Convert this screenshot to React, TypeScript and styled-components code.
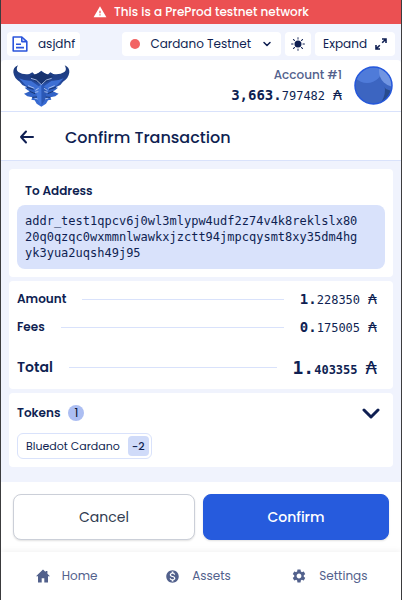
import React from "react";
import styled, { createGlobalStyle } from "styled-components";
import { MdWarning, MdMonetizationOn, MdSettings } from "react-icons/md";
import { BsBrightnessHighFill } from "react-icons/bs";
import { ChevronDown } from "lucide-react";

const navy = "#0f1f52";
const slate = "#52618c";
const pale = "#f0f3fd";
const line = "#d9e2fb";

const GlobalStyle = createGlobalStyle`
  *, *::before, *::after { box-sizing: border-box; }
  body {
    margin: 0;
    background: #ffffff;
    color: ${navy};
    font-family: Poppins, Inter, sans-serif;
    font-size: 12px;
  }
  button { font-family: inherit; color: inherit; cursor: pointer; }
  svg { flex: none; display: block; }
`;

const Page = styled.div`
  display: flex;
  flex-direction: column;
  min-height: 100vh;
  background: ${pale};
  border: solid #3c3c3e;
  border-width: 0 1px;
`;

const Banner = styled.div`
  display: flex;
  align-items: center;
  justify-content: center;
  gap: 7px;
  height: 24px;
  background: #eb5052;
  color: #ffffff;
  font-weight: 500;
`;

const TopBar = styled.div`
  display: flex;
  align-items: center;
  gap: 4px;
  padding: 8px 6px 4px;
`;

const Spacer = styled.div`
  flex: 1;
`;

const Pill = styled.button<{ $gap?: number; $pad?: number }>`
  display: flex;
  align-items: center;
  gap: ${(p) => p.$gap ?? 8}px;
  height: 24px;
  padding: 0 ${(p) => p.$pad ?? 8}px;
  border: 0;
  border-radius: 4px;
  background: #ffffff;
  font-size: 12px;
  white-space: nowrap;
`;

const Dot = styled.span`
  width: 10px;
  height: 10px;
  border-radius: 50%;
  background: #f26464;
`;

const Header = styled.header`
  display: flex;
  align-items: center;
  justify-content: space-between;
  height: 52px;
  padding: 0 8px 0 12px;
  background: #ffffff;
  border-bottom: 1px solid ${line};
  border-radius: 4px 4px 0 0;
`;

const Account = styled.div`
  display: flex;
  align-items: center;
  gap: 12px;
`;

const AccountText = styled.div`
  display: flex;
  flex-direction: column;
  align-items: flex-end;
  line-height: 20px;
`;

const AccountName = styled.span`
  color: ${slate};
  font-weight: 500;
`;

const TitleBar = styled.div`
  display: flex;
  align-items: center;
  gap: 28px;
  height: 49px;
  padding: 2px 16px 0;
  background: #ffffff;
  border-bottom: 1px solid ${line};
`;

const IconButton = styled.button`
  display: flex;
  padding: 0;
  border: 0;
  background: none;
`;

const Title = styled.h1`
  margin: 0;
  font-size: 16px;
  font-weight: 500;
`;

const Content = styled.main`
  display: flex;
  flex: 1;
  flex-direction: column;
  gap: 4px;
  padding: 8px 8px 15px;
`;

const Card = styled.section`
  padding: 8px;
  background: #ffffff;
  border-radius: 4px;
`;

const Label = styled.h2`
  margin: 0;
  font-size: 12px;
  line-height: 24px;
  font-weight: 600;
`;

const AddressLabel = styled(Label)`
  padding: 2px 8px;
`;

const Address = styled.p`
  margin: 0;
  padding: 8px 24px 8px 8px;
  border-radius: 8px;
  background: #d9e2fb;
  font-family: "DejaVu Sans Mono", monospace;
  line-height: 16px;
  word-break: break-all;
`;

const Row = styled.div`
  display: flex;
  align-items: center;
  gap: 16px;
  height: 20px;
  margin-bottom: 8px;
  padding-right: 8px;
  font-weight: 600;
`;

const TotalRow = styled(Row)`
  height: 32px;
  margin: 14px 0 -2px;
  font-size: 14px;
`;

const Rule = styled.span`
  flex: 1;
  height: 1px;
  background: ${line};
`;

const Money = styled.span<{ $total?: boolean }>`
  font-family: "DejaVu Sans Mono", monospace;
  font-size: ${(p) => (p.$total ? 18 : 14)}px;
  font-weight: 400;
`;

const Whole = styled.b`
  font-weight: 700;
`;

const Decimals = styled.span<{ $total?: boolean }>`
  margin-right: 8px;
  font-size: 12px;
  font-weight: ${(p) => (p.$total ? 700 : 400)};
`;

const Symbol = styled.span<{ $total?: boolean }>`
  font-family: "DejaVu Sans", sans-serif;
  font-size: ${(p) => (p.$total ? 18 : 14)}px;
`;

const TokensHead = styled.div`
  display: flex;
  align-items: center;
  gap: 8px;
  padding-right: 5px;
`;

const Count = styled.span`
  width: 16px;
  height: 16px;
  border-radius: 50%;
  background: #acbef2;
  color: #0a1230;
  line-height: 16px;
  text-align: center;
`;

const Chip = styled.div`
  display: inline-flex;
  align-items: center;
  gap: 8px;
  height: 26px;
  margin-top: 8px;
  padding: 2px 2px 2px 8px;
  border: 1px solid ${line};
  border-radius: 6px;
  font-size: 11px;
`;

const ChipValue = styled.span`
  padding: 0 4px;
  border-radius: 4px;
  background: #d0dbf9;
  line-height: 20px;
  font-weight: 500;
`;

const Actions = styled.div`
  display: grid;
  grid-template-columns: 182fr 186fr;
  gap: 8px;
  padding: 12px;
  background: #ffffff;
`;

const Action = styled.button<{ $primary?: boolean }>`
  height: 46px;
  border: 1px solid ${(p) => (p.$primary ? "#265bdd" : "#cbcfd8")};
  border-radius: 8px;
  background: ${(p) => (p.$primary ? "#265bdd" : "#ffffff")};
  box-shadow: 0 1px 2px rgba(0, 0, 0, 0.12);
  color: ${(p) => (p.$primary ? "#ffffff" : "#303b50")};
  font-size: 14px;
  font-weight: ${(p) => (p.$primary ? 500 : 400)};
`;

const Nav = styled.nav`
  display: grid;
  grid-template-columns: repeat(3, 1fr);
  height: 48px;
  padding-right: 6px;
  background: #ffffff;
  box-shadow: 0 -1px 6px rgba(0, 0, 0, 0.06);
`;

const NavLink = styled.a`
  display: flex;
  align-items: center;
  justify-content: center;
  gap: 12px;
  color: ${slate};
  text-decoration: none;
`;

const DocIcon = () => (
  <svg width="16" height="16" viewBox="0 0 16 16" fill="none" stroke="#2b55dc" strokeWidth="1.6" strokeLinejoin="round">
    <path d="M1.2 1h8.6l5 4.6V15H1.2z" />
    <path d="M9.8 1v4.6h5" />
    <path d="M4 8.2h5M4 11.6h8" />
  </svg>
);

const ExpandIcon = () => (
  <svg width="12" height="12" viewBox="0 0 12 12" fill="none" stroke={navy} strokeWidth="1.6">
    <path d="M7 1h4v4M11 1L7.2 4.8M1 7v4h4M1 11l3.8-3.8" />
  </svg>
);

const BackIcon = () => (
  <svg width="20" height="20" viewBox="0 0 20 20" fill="none" stroke={navy} strokeWidth="2" strokeLinecap="round" strokeLinejoin="round">
    <path d="M9 4.5L4 10l5 5.5M4 10h12" />
  </svg>
);

const OpenIcon = () => (
  <svg width="18" height="11" viewBox="0 0 18 11" fill="none" stroke={navy} strokeWidth="3" strokeLinecap="round" strokeLinejoin="round">
    <path d="M2 2l7 7 7-7" />
  </svg>
);

const HomeIcon = () => (
  <svg width="14" height="14" viewBox="0 0 14 14" fill="currentColor">
    <path d="M7 .5L0 7.2h2v6.3h3.7V9.3h2.6v4.2H12V7.2h2l-2.6-2.5V2H9.6v1z" />
  </svg>
);

const Logo = () => (
  <svg width="57" height="42" viewBox="0 0 171 126" role="img" aria-label="Wallet logo">
    <defs>
      <linearGradient id="horn" x1="0" y1="0" x2="0" y2="1">
        <stop offset="0" stopColor="#1b3878" />
        <stop offset="0.35" stopColor="#21428f" />
        <stop offset="0.6" stopColor="#2f60c2" />
        <stop offset="1" stopColor="#3a6dd6" />
      </linearGradient>
    </defs>
    <path
      fill="url(#horn)"
      d="M15 1Q0 7 1 22Q3 40 20 50L28 60L42 67L35 68L44 76L50 79L39 84L33 86L43 94L58 97L55 104L65 106L71 116L85 125L99 116L105 106L115 104L112 97L127 94L137 86L131 84L120 79L126 76L135 68L128 67L142 60L150 50Q167 40 169 22Q170 7 155 1Q163 14 154 21Q140 30 121 27L112 22L104 29L97 26L85 17L73 26L66 29L58 22L49 27Q30 30 16 21Q7 14 15 1z"
    />
    <path fill="#3d6fd4" d="M18 40Q34 48 54 47L76 63L84 72V98L70 84L58 70L38 61zM152 40Q136 48 116 47L94 63L86 72V98L100 84L112 70L132 61z" />
    <path fill="#17336f" d="M51 34L85 21L119 34L105 48L85 58L65 48z" />
    <path fill="#2b58b5" d="M85 58L102 72L97 103L85 122z" />
    <path fill="#4478dc" d="M85 58L68 72L73 103L85 122z" />
    <path
      fill="none"
      stroke="#b9cdf4"
      strokeWidth="2.5"
      d="M54 40L70 45L85 59L100 45L116 40M45 62L64 70M125 62L106 70M67 76L77 70M103 76L93 70M66 82L76 80M104 82L94 80M64 99L74 102M106 99L96 102"
    />
    <path fill="none" stroke="#193775" strokeWidth="3" d="M42 67L62 73M128 67L108 73M50 79L66 86M120 79L104 86M58 97L72 96M112 97L98 96" />
  </svg>
);

const Avatar = () => (
  <svg width="39" height="39" viewBox="0 0 39 39" role="img" aria-label="Account avatar">
    <defs>
      <clipPath id="disc">
        <circle cx="19.5" cy="19.5" r="18.5" />
      </clipPath>
    </defs>
    <g clipPath="url(#disc)">
      <rect width="39" height="39" fill="#284b8d" />
      <circle cx="10" cy="24" r="21" fill="#3c65c1" />
      <path d="M20 9l8 3q6 8 12 9v5l-8-3z" fill="#3c65c1" />
      <circle cx="13" cy="1" r="16" fill="#4f7bd9" />
      <circle cx="41" cy="5" r="16" fill="#7195e2" />
    </g>
    <circle cx="19.5" cy="19.5" r="18.5" fill="none" stroke="#2558dc" strokeWidth="1.5" />
  </svg>
);

type AmountProps = { whole: string; decimals: string; total?: boolean };

const Amount = ({ whole, decimals, total }: AmountProps) => (
  <Money $total={total}>
    <Whole>{whole}.</Whole>
    <Decimals $total={total}>{decimals}</Decimals>
    <Symbol $total={total}>₳</Symbol>
  </Money>
);

export default function App() {
  return (
    <>
      <GlobalStyle />
      <Page>
        <Banner role="status">
          <MdWarning size={14} />
          This is a PreProd testnet network
        </Banner>
        <TopBar>
          <Pill $gap={10} $pad={5}>
            <DocIcon />
            asjdhf
          </Pill>
          <Spacer />
          <Pill $gap={10}>
            <Dot />
            Cardano Testnet
            <ChevronDown size={12} strokeWidth={3} />
          </Pill>
          <Pill $pad={6} aria-label="Toggle theme">
            <BsBrightnessHighFill size={14} />
          </Pill>
          <Pill>
            Expand
            <ExpandIcon />
          </Pill>
        </TopBar>
        <Header>
          <Logo />
          <Account>
            <AccountText>
              <AccountName>Account #1</AccountName>
              <Amount whole="3,663" decimals="797482" />
            </AccountText>
            <Avatar />
          </Account>
        </Header>
        <TitleBar>
          <IconButton aria-label="Back">
            <BackIcon />
          </IconButton>
          <Title>Confirm Transaction</Title>
        </TitleBar>
        <Content>
          <Card>
            <AddressLabel>To Address</AddressLabel>
            <Address>
              addr_test1qpcv6j0wl3mlypw4udf2z74v4k8reklslx8020q0qzqc0wxmmnlwawkxjzctt94jmpcqysmt8xy35dm4hgyk3yua2uqsh49j95
            </Address>
          </Card>
          <Card>
            <Row>
              Amount
              <Rule />
              <Amount whole="1" decimals="228350" />
            </Row>
            <Row>
              Fees
              <Rule />
              <Amount whole="0" decimals="175005" />
            </Row>
            <TotalRow>
              Total
              <Rule />
              <Amount whole="1" decimals="403355" total />
            </TotalRow>
          </Card>
          <Card>
            <TokensHead>
              <Label>Tokens</Label>
              <Count>1</Count>
              <Spacer />
              <IconButton aria-label="Show tokens">
                <OpenIcon />
              </IconButton>
            </TokensHead>
            <Chip>
              Bluedot Cardano
              <ChipValue>-2</ChipValue>
            </Chip>
          </Card>
        </Content>
        <Actions>
          <Action>Cancel</Action>
          <Action $primary>Confirm</Action>
        </Actions>
        <Nav>
          <NavLink href="#home">
            <HomeIcon />
            Home
          </NavLink>
          <NavLink href="#assets">
            <MdMonetizationOn size={15} />
            Assets
          </NavLink>
          <NavLink href="#settings">
            <MdSettings size={16} />
            Settings
          </NavLink>
        </Nav>
      </Page>
    </>
  );
}
